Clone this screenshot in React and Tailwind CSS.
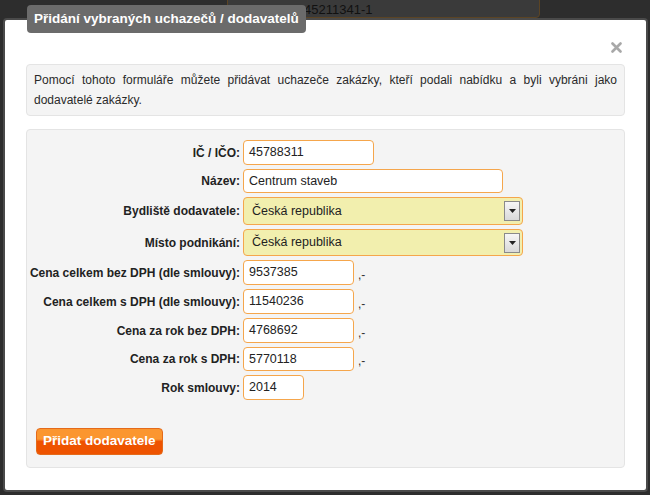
import React from 'react';

const rows = [
  { label: 'IČ / IČO:', value: '45788311', w: 'w-[131px]', h: 'h-[25px]' },
  { label: 'Název:', value: 'Centrum staveb', w: 'w-[260px]', h: 'h-[24px]' },
  { label: 'Bydliště dodavatele:', value: 'Česká republika', select: true, h: 'h-[28px]' },
  { label: 'Místo podnikání:', value: 'Česká republika', select: true, h: 'h-[27px]' },
  { label: 'Cena celkem bez DPH (dle smlouvy):', value: '9537385', w: 'w-[111px]', h: 'h-[25px]', suffix: true },
  { label: 'Cena celkem s DPH (dle smlouvy):', value: '11540236', w: 'w-[111px]', h: 'h-[25px]', suffix: true },
  { label: 'Cena za rok bez DPH:', value: '4768692', w: 'w-[111px]', h: 'h-[25px]', suffix: true },
  { label: 'Cena za rok s DPH:', value: '5770118', w: 'w-[111px]', h: 'h-[24px]', suffix: true },
  { label: 'Rok smlouvy:', value: '2014', w: 'w-[61px]', h: 'h-[25px]' },
];

function SelectBox({ value, h }) {
  return (
    <div className={`flex ${h} w-[280px] items-center justify-between rounded-[4px] border border-[#f5a64c] bg-[#f2efae] pl-[8px] pr-[2px] text-[12.5px] text-[#222]`}>
      <span>{value}</span>
      <span className="flex h-[20px] w-[16px] items-center justify-center border border-[#8a8a8a] bg-gradient-to-b from-[#f6f6f6] to-[#d9d9d9]">
        <svg width="7" height="4" viewBox="0 0 7 4"><path d="M0 0h7L3.5 4z" fill="#222" /></svg>
      </span>
    </div>
  );
}

export default function App() {
  return (
    <div className="relative h-[495px] w-[650px] overflow-hidden bg-[#2d2d2d] font-['Liberation_Sans'] antialiased">
      {/* dimmed page behind */}
      <div className="absolute left-[227px] top-[-6px] h-[24px] w-[313px] rounded-[4px] border border-[#5b4424] bg-[#3a3a3a] pl-[76px] pt-[8px] text-[13px] leading-none text-[#111]">
        45211341-1
      </div>

      {/* Dialog */}
      <div className="absolute left-[3px] top-[18px] h-[474px] w-[645px] rounded-[4px] border-2 border-[#4a4a4a] bg-white px-[21px] pt-[44px]">
        <button className="absolute right-[24px] top-[22px]">
          <svg width="11" height="11" viewBox="0 0 11 11">
            <path d="M1.5 1.5l8 8M9.5 1.5l-8 8" stroke="#a8a8a8" strokeWidth="2.6" strokeLinecap="round" />
          </svg>
        </button>

        {/* Info */}
        <div className="rounded-[4px] border border-[#e4e4e4] bg-[#f4f4f4] px-[7px] py-[5px] text-justify text-[12px] leading-[20px] text-[#2a2a2a]">
          Pomocí tohoto formuláře můžete přidávat uchazeče zakázky, kteří podali nabídku a byli vybráni jako dodavatelé zakázky.
        </div>

        {/* Form */}
        <div className="mt-[13px] rounded-[4px] border border-[#e4e4e4] bg-[#f4f4f4] pb-[12px] pt-[10px]">
          <div className="flex flex-col gap-[4px]">
            {rows.map((r) => (
              <div key={r.label} className="flex items-center">
                <div className="flex w-[216px] shrink-0 justify-end whitespace-nowrap pr-[3px] text-[12px] font-bold text-[#222]">{r.label}</div>
                {r.select ? (
                  <SelectBox value={r.value} h={r.h} />
                ) : (
                  <div className={`flex ${r.h} ${r.w} items-center rounded-[4px] border border-[#f5a64c] bg-white pl-[5px] text-[12.5px] text-[#222]`}>
                    {r.value}
                  </div>
                )}
                {r.suffix && <span className="ml-[4px] mt-[4px] text-[12px] text-[#333]">,-</span>}
              </div>
            ))}
          </div>

          <button className="ml-[9px] mt-[28px] h-[27px] rounded-[4px] border border-[#e46a1a] bg-gradient-to-b from-[#fb962f] from-40% to-[#ee5300] to-50% px-[6px] text-[13.5px] font-bold text-white">
            Přidat dodavatele
          </button>
        </div>
      </div>

      {/* Title tab */}
      <div className="absolute left-[27px] top-[5px] flex h-[28px] items-center rounded-[4px] bg-[#6b6b6b] px-[7px] text-[13.5px] font-bold text-white">
        Přidání vybraných uchazečů / dodavatelů
      </div>
    </div>
  );
}
